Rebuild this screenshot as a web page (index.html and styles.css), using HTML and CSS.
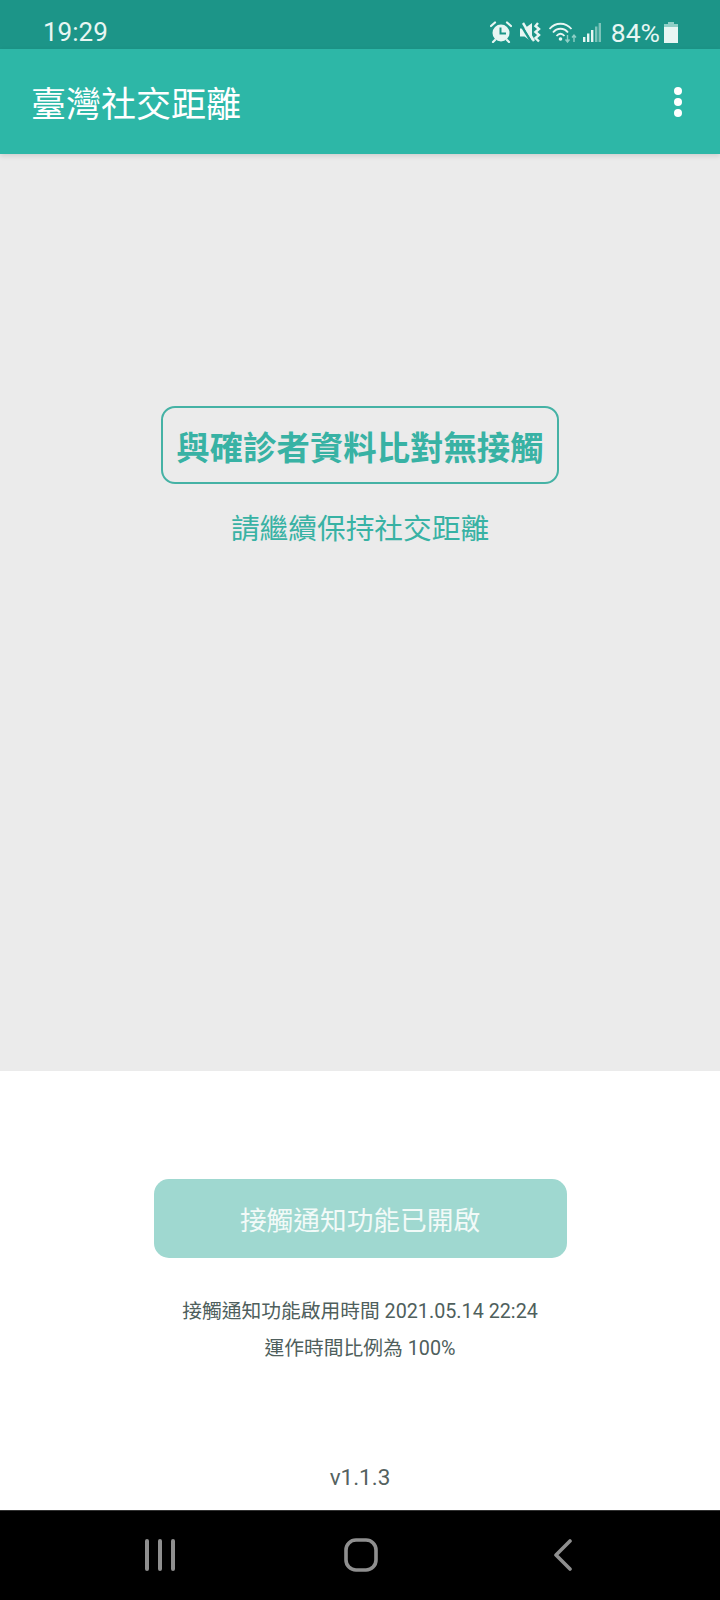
FILE: index.html
```html
<!DOCTYPE html>
<html>
<head>
    <title>臺灣社交距離</title>
    <link rel="stylesheet" href="styles.css">
</head>
<body>
    <div class="status-bar">
        <span class="clock">19:29</span>
        <div class="status-icons">
            <!-- alarm -->
            <svg class="icon-alarm" width="22" height="22" viewBox="0 0 22 22">
                <circle cx="11" cy="12" r="8.500" fill="#e8f6f3"/>
                <path d="M10.500 6.500v6h5.500" fill="none" stroke="#1c9588" stroke-width="2"/>
                <path d="M1 5 L5 1.500 M21 5 L17 1.500 M5 19 L3 21 M17 19 L19 21" stroke="#e8f6f3" stroke-width="2.200" stroke-linecap="round"/>
            </svg>
            <!-- mute / vibrate -->
            <svg class="icon-mute" width="21" height="21" viewBox="0 0 21 21">
                <path d="M0 6.500h4.500L12 1v19l-7.500-5.500H0z" fill="#e8f6f3"/>
                <path d="M1 3 L12 21" stroke="#1c9588" stroke-width="2.400"/>
                <path d="M3 1 L14 19" stroke="#e8f6f3" stroke-width="2.400"/>
                <path d="M18 1 l-2.500 3 3.500 3 -3.500 3 3.500 3 -3.500 3 3.500 3.500" fill="none" stroke="#e8f6f3" stroke-width="2.400"/>
            </svg>
            <!-- wifi -->
            <svg class="icon-wifi" width="28" height="21" viewBox="0 0 28 21">
                <path d="M0.500 7 C6.500 0 16.500 0 22.500 7 M4 10.500 C8 5.500 15 5.500 19 10.500 M7.500 14 C10 11 13 11 15.500 14" fill="none" stroke="#e8f6f3" stroke-width="1.800"/>
                <circle cx="11.500" cy="17" r="1.800" fill="#e8f6f3"/>
                <path d="M18.500 13v7M16.500 17.500l2 2.500 2-2.500M25 20v-7M23 15.500l2-2.500 2 2.500" fill="none" stroke="#8fcfc6" stroke-width="1.400"/>
            </svg>
            <!-- signal -->
            <svg class="icon-signal" width="18" height="19" viewBox="0 0 18 19">
                <rect x="0" y="14" width="2.400" height="5" fill="#e8f6f3"/>
                <rect x="4" y="10.500" width="2.400" height="8.500" fill="#e8f6f3"/>
                <rect x="8" y="7" width="2.400" height="12" fill="#e8f6f3"/>
                <rect x="12" y="3.500" width="2.400" height="15.500" fill="#7cc4ba"/>
                <rect x="15.600" y="0" width="2.400" height="19" fill="#7cc4ba"/>
            </svg>
            <span class="battery-text">84%</span>
            <svg class="icon-battery" width="14" height="21" viewBox="0 0 14 21">
                <rect x="4" y="0" width="6" height="2" fill="#8fcfc6"/>
                <rect x="0" y="2" width="14" height="3" fill="#8fcfc6"/>
                <rect x="0" y="5" width="14" height="16" fill="#e8f6f3"/>
            </svg>
        </div>
    </div>

    <header class="app-bar">
        <h1 class="app-title">臺灣社交距離</h1>
        <div class="menu-dots"><i></i><i></i><i></i></div>
    </header>

    <main class="result-panel">
        <div class="result-box">與確診者資料比對無接觸</div>
        <p class="result-hint">請繼續保持社交距離</p>
    </main>

    <section class="info-panel">
        <button class="notify-button">接觸通知功能已開啟</button>
        <p class="info-line">接觸通知功能啟用時間 2021.05.14 22:24</p>
        <p class="info-line">運作時間比例為 100%</p>
        <p class="version">v1.1.3</p>
    </section>

    <nav class="nav-bar">
        <svg class="nav-recent" width="32" height="32" viewBox="0 0 32 32">
            <path d="M3 2v28M16 2v28M29 2v28" stroke="#8f8f8f" stroke-width="4" stroke-linecap="round"/>
        </svg>
        <svg class="nav-home" width="34" height="34" viewBox="0 0 34 34">
            <rect x="2" y="2" width="30" height="30" rx="10" fill="none" stroke="#8f8f8f" stroke-width="3.600"/>
        </svg>
        <svg class="nav-back" width="20" height="32" viewBox="0 0 20 32">
            <path d="M17 2 L3 16 L17 30" fill="none" stroke="#8f8f8f" stroke-width="3.600" stroke-linecap="round" stroke-linejoin="round"/>
        </svg>
    </nav>
</body>
</html>
```

FILE: styles.css
```css
* {
    box-sizing: border-box;
}

body {
    margin: 0;
    width: 720px;
    height: 1600px;
    display: flex;
    flex-direction: column;
    font-family: Roboto, "Noto Sans CJK TC", sans-serif;
    background-color: #fff;
}

/* status bar */
.status-bar {
    height: 49px;
    flex-shrink: 0;
    padding: 15px 42px 0 43px;
    display: flex;
    justify-content: space-between;
    align-items: center;
    background-color: #1c9588;
    color: #e8f6f3;
}

.clock {
    font-size: 26px;
}

.status-icons {
    display: flex;
    align-items: center;
}

.icon-mute {
    margin-left: 8px;
}

.icon-wifi {
    margin-left: 8px;
}

.icon-signal {
    margin-left: 6px;
}

.battery-text {
    font-size: 26.500px;
    margin-left: 10px;
}

.icon-battery {
    margin-left: 4px;
}

/* app bar */
.app-bar {
    height: 105px;
    flex-shrink: 0;
    padding: 0 38px 0 31px;
    display: flex;
    justify-content: space-between;
    align-items: center;
    background-color: #2db7a7;
    box-shadow: 0 2px 5px rgba(0, 0, 0, 0.12);
    position: relative;
}

.app-title {
    margin: 0;
    font-size: 35px;
    font-weight: 400;
    color: #fff;
}

.menu-dots {
    display: flex;
    flex-direction: column;
    gap: 3px;
}

.menu-dots i {
    width: 8px;
    height: 8px;
    border-radius: 50%;
    background-color: #fff;
}

/* grey middle part */
.result-panel {
    height: 917px;
    flex-shrink: 0;
    padding-top: 252px;
    display: flex;
    flex-direction: column;
    align-items: center;
    background-color: #ebebeb;
}

.result-box {
    width: 398px;
    height: 78px;
    display: flex;
    justify-content: center;
    align-items: center;
    font-size: 33.400px;
    font-weight: 700;
    color: #38b2a4;
    border: 2px solid #45b2a5;
    border-radius: 14px;
}

.result-hint {
    margin: 24px 0 0;
    font-size: 28.700px;
    line-height: 42px;
    color: #38b2a4;
}

/* white lower part */
.info-panel {
    flex-grow: 1;
    padding-top: 108px;
    display: flex;
    flex-direction: column;
    align-items: center;
}

.notify-button {
    width: 413px;
    height: 79px;
    border: none;
    border-radius: 15px;
    font-family: inherit;
    font-size: 26.700px;
    color: #f2faf8;
    background-color: #9fd8d0;
    margin-bottom: 35px;
}

.info-line {
    margin: 0;
    font-size: 19.750px;
    line-height: 37px;
    color: #4f5f5d;
}

.version {
    margin: 95px 0 0;
    font-size: 22.500px;
    line-height: 30px;
    color: #55625f;
}

/* bottom nav */
.nav-bar {
    height: 90px;
    flex-shrink: 0;
    padding: 0 0 1px 144px;
    display: flex;
    align-items: center;
    background-color: #000;
    border-top: 1px solid #333;
}

.nav-home {
    margin-left: 168px;
}

.nav-back {
    margin-left: 175px;
}
```
